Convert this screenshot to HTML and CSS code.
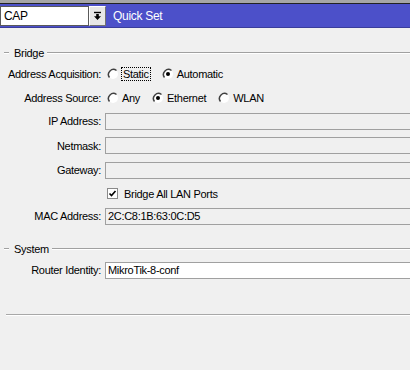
FILE: index.html
```html
<!DOCTYPE html>
<html lang="en">
<head>
  <meta charset="UTF-8">
  <title>Quick Set</title>
  <link rel="stylesheet" href="styles.css">
</head>
<body>
  <div class="titlebar">
    <div class="combo">
      <span class="combo-text">CAP</span>
      <span class="combo-btn">
        <svg width="9" height="10" viewBox="0 0 9 10"><path d="M1 1.5h7" stroke="#000" stroke-width="1.4"/><path d="M3.2 3h2.6v2.2h2.2L4.5 9 1 5.2h2.2z" fill="#000"/></svg>
      </span>
    </div>
    <span class="title">Quick Set</span>
  </div>

  <div class="group">
    <div class="legend"><span>Bridge</span></div>
    <div class="rows bridge-rows">
      <label class="lbl">Address Acquisition:</label>
      <div class="opts">
        <span class="opt"><svg class="radio" viewBox="0 0 12 12"><circle cx="6" cy="6" r="5" fill="#fff"/><path d="M9.5 2.5A5 5 0 0 0 2.5 9.5" fill="none" stroke="#404040" stroke-width="1.5"/></svg><span class="focus">Static</span></span>
        <span class="opt"><svg class="radio" viewBox="0 0 12 12"><circle cx="6" cy="6" r="5" fill="#fff"/><path d="M9.5 2.5A5 5 0 0 0 2.5 9.5" fill="none" stroke="#404040" stroke-width="1.5"/><circle cx="6" cy="6" r="2" fill="#000"/></svg>Automatic</span>
      </div>

      <label class="lbl">Address Source:</label>
      <div class="opts">
        <span class="opt"><svg class="radio" viewBox="0 0 12 12"><circle cx="6" cy="6" r="5" fill="#fff"/><path d="M9.5 2.5A5 5 0 0 0 2.5 9.5" fill="none" stroke="#404040" stroke-width="1.5"/></svg>Any</span>
        <span class="opt"><svg class="radio" viewBox="0 0 12 12"><circle cx="6" cy="6" r="5" fill="#fff"/><path d="M9.5 2.5A5 5 0 0 0 2.5 9.5" fill="none" stroke="#404040" stroke-width="1.5"/><circle cx="6" cy="6" r="2" fill="#000"/></svg>Ethernet</span>
        <span class="opt"><svg class="radio" viewBox="0 0 12 12"><circle cx="6" cy="6" r="5" fill="#fff"/><path d="M9.5 2.5A5 5 0 0 0 2.5 9.5" fill="none" stroke="#404040" stroke-width="1.5"/></svg>WLAN</span>
      </div>

      <label class="lbl">IP Address:</label>
      <div class="field disabled"></div>

      <label class="lbl">Netmask:</label>
      <div class="field disabled"></div>

      <label class="lbl">Gateway:</label>
      <div class="field disabled"></div>

      <span></span>
      <div class="opts">
        <span class="opt"><svg class="check" viewBox="0 0 11 11"><rect x="0.5" y="0.5" width="10" height="10" fill="#fff" stroke="#8a8a8a"/><path d="M2.5 5.5l2 2 4-4.5" fill="none" stroke="#000" stroke-width="1.6"/></svg>Bridge All LAN Ports</span>
      </div>

      <label class="lbl">MAC Address:</label>
      <div class="field disabled">2C:C8:1B:63:0C:D5</div>
    </div>
  </div>

  <div class="group system">
    <div class="legend"><span>System</span></div>
    <div class="rows">
      <label class="lbl">Router Identity:</label>
      <div class="field">MikroTik-8-conf</div>
    </div>
  </div>

  <div class="separator"></div>
</body>
</html>
```

FILE: styles.css
```css
html {
  overflow: hidden;
}
body {
  margin: 0;
  width: 410px;
  height: 370px;
  background: #f0f0f0;
  font-family: "Liberation Sans", Arial, sans-serif;
  font-size: 11px;
  letter-spacing: -0.3px;
  color: #000;
}
.titlebar {
  display: flex;
  align-items: center;
  height: 23px;
  border-top: 3px solid #a6a6a6;
  border-bottom: 1px solid #3a3d9c;
  box-shadow: inset 0 1px 0 #222;
  background: #4c50c9;
  padding-top: 1px;
}
.combo {
  display: flex;
  height: 20px;
  width: 106px;
  margin-top: 1px;
}
.combo-text {
  flex: 1;
  display: flex;
  align-items: center;
  padding-left: 3px;
  background: #fff;
  border: 1px solid #5a5a5a;
  font-size: 12px;
}
.combo-btn {
  width: 15px;
  display: flex;
  align-items: center;
  justify-content: center;
  background: #e6e6e6;
  border: 1px solid #fff;
  border-right-color: #707070;
  border-bottom-color: #707070;
}
.title {
  margin-left: 7px;
  color: #fff;
  font-size: 12px;
}
.group {
  padding-top: 18px;
}
.legend {
  display: flex;
  align-items: center;
  height: 14px;
  padding-left: 4px;
}
.legend::before,
.legend::after {
  content: "";
  height: 0;
  border-top: 1px solid #a0a0a0;
  border-bottom: 1px solid #fff;
}
.legend::before {
  width: 5px;
}
.legend::after {
  flex: 1;
}
.legend span {
  padding: 0 3px 0 5px;
}
.rows {
  display: grid;
  grid-template-columns: 101px 310px;
  grid-auto-rows: 24px;
  column-gap: 4px;
  align-items: center;
  margin-top: 2px;
}
.bridge-rows {
  grid-template-rows: 24px 23px 24px 25px 24px 23px 22px;
}
.lbl {
  text-align: right;
  white-space: nowrap;
}
.opts {
  display: flex;
  align-items: center;
  gap: 12px;
  padding-left: 2px;
}
.opt {
  display: flex;
  align-items: center;
  gap: 3px;
}
.radio {
  width: 12px;
  height: 12px;
}
.check {
  width: 11px;
  height: 11px;
  margin-right: 3px;
}
.focus {
  outline: 1px dotted #000;
  padding: 0 1px;
}
.field {
  height: 17px;
  box-sizing: border-box;
  border: 1px solid #a0a0a0;
  background: #fff;
  padding-left: 2px;
  line-height: 15px;
}
.field.disabled {
  background: #f0f0f0;
}
.system {
  padding-top: 15px;
}
.separator {
  margin: 32px 0 0 6px;
  border-top: 1px solid #a8a8a8;
  border-bottom: 1px solid #fff;
}
```
